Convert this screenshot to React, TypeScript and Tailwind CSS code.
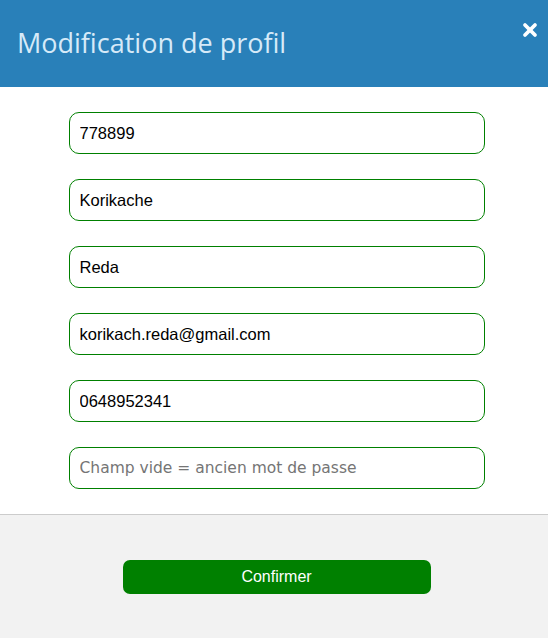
import { X } from 'lucide-react';

const fields = [
  { value: '778899', type: 'text' },
  { value: 'Korikache', type: 'text' },
  { value: 'Reda', type: 'text' },
  { value: 'korikach.reda@gmail.com', type: 'email' },
  { value: '0648952341', type: 'text' },
];

export default function App() {
  return (
    <div className="flex h-[638px] w-[548px] flex-col bg-white" style={{ fontFamily: '"Liberation Sans", Arial, sans-serif' }}>
      {/* Header */}
      <div className="relative flex h-[87px] shrink-0 items-center bg-[#2980b9] px-[17px]">
        <h1 className="text-[27px] font-medium text-[#d6eaf8]" style={{ fontFamily: '"Open Sans", sans-serif' }}>
          Modification de profil
        </h1>
        <button className="absolute right-[8px] top-[20px] text-white">
          <X size={20} strokeWidth={4.5} />
        </button>
      </div>

      {/* Form */}
      <div className="flex flex-col items-center gap-[25px] py-[25px] pl-[5px]">
        {fields.map((f) => (
          <input
            key={f.value}
            type={f.type}
            defaultValue={f.value}
            className="h-[42px] w-[416px] rounded-[10px] border border-[#008000] px-[10px] text-[16.5px] text-black outline-none"
          />
        ))}
        <input
          type="password"
          placeholder="Champ vide = ancien mot de passe"
          className="h-[42px] w-[416px] rounded-[10px] border border-[#008000] px-[10px] text-[16px] text-black outline-none placeholder:font-['DejaVu_Sans'] placeholder:text-[15.5px] placeholder:text-[#757575]"
        />
      </div>

      {/* Footer */}
      <div className="flex flex-1 items-start justify-center border-t border-[#cccccc] bg-[#f2f2f2] pl-[5px] pt-[45px]">
        <button className="h-[34px] w-[308px] rounded-[7px] bg-[#008000] text-[16px] text-white">
          Confirmer
        </button>
      </div>
    </div>
  );
}
